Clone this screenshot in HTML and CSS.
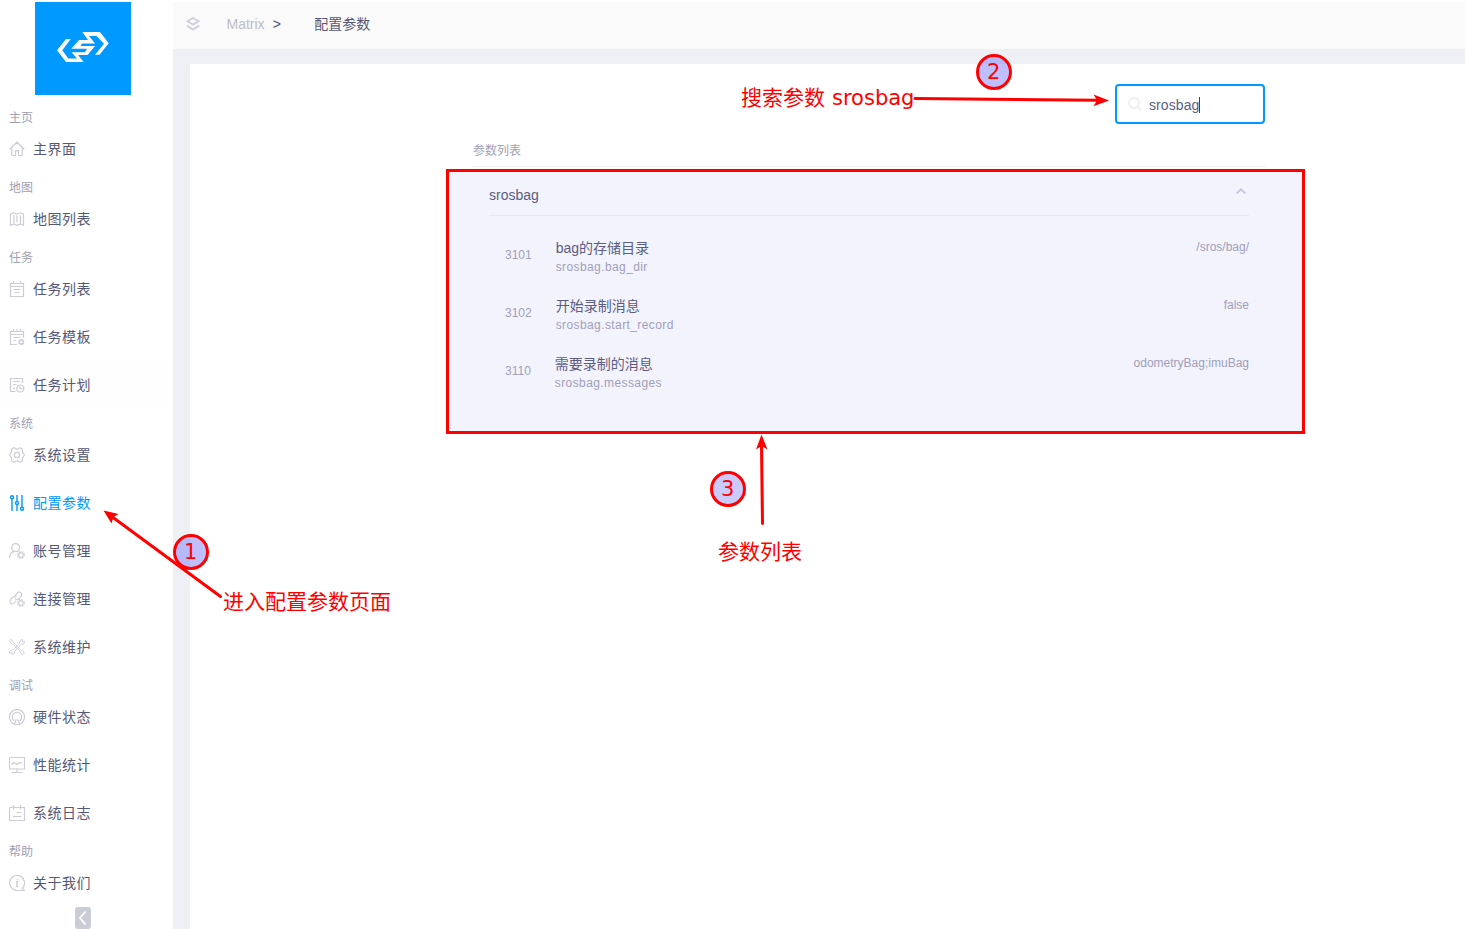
FILE: index.html
```html
<!DOCTYPE html>
<html lang="zh-CN">
<head>
<meta charset="utf-8">
<title>Matrix</title>
<link rel="stylesheet" href="styles.css">
</head>
<body>
<div class="app">
  <aside class="sidebar">
    <div class="logo">
      <svg width="96" height="93" viewBox="0 0 96 93" fill="#fff">
        <path d="M35.700 37H31L22 48.300 31 60H48.700L43 53H52.500L60 44H45.500L47 41.500H60L54 34H61.500L69 41.700 60 52.700H64.500L73.700 41.300 65 30H47.300L53 38H44L36.300 46.700H52L50 50.300H36.500L42 56.500H33.300L27.300 48.300Z"/>
      </svg>
    </div>
    <nav class="nav">
      <h2 class="group">主页</h2>
      <a class="item"><svg class="icon" viewBox="0 0 16 16"><path d="M.7 8.200 8 1.200l7.300 7M2.800 7v7.500h3.700V9.700h3v4.800h3.700V7"/></svg>主界面</a>
      <h2 class="group">地图</h2>
      <a class="item"><svg class="icon" viewBox="0 0 16 16"><path d="M1.500 3.200 5 1.800l3 1.400 3.500-1.400 3 1.400v11L11.500 13 8 14.300 5 13l-3.500 1.300zM5 4.500V13M8 4.500v6.500M11.500 4.500V13"/></svg>地图列表</a>
      <h2 class="group">任务</h2>
      <a class="item"><svg class="icon" viewBox="0 0 16 16"><path d="M1.500 2.500h13v13h-13zM1.500 5.500h13M4.500 0v3M11.500 0v3M4.500 8.500h7M5.500 11.500h5"/></svg>任务列表</a>
      <a class="item"><svg class="icon" viewBox="0 0 16 16"><path d="M14.500 9V2.500h-13v13H8M1.500 5.500h13M4.500 0v3M8 0v3M11.500 0v3M4.500 8.500h7M4.500 11.500h3"/><circle cx="12.300" cy="13" r="2.100" stroke-width="1.600"/></svg>任务模板</a>
      <a class="item hovered"><svg class="icon" viewBox="0 0 16 16"><path d="M13.500 6V1.500h-12v13h5M4 4.500h7M4 7.500h3.500M4 11.500h2M11 9.500v2.200h2.500"/><circle cx="11.300" cy="11.500" r="3.500"/></svg>任务计划</a>
      <h2 class="group">系统</h2>
      <a class="item"><svg class="icon" viewBox="0 0 16 16"><path d="M5 .7 8 2.200 11 .7l2.300 1.400.2 3.100L15.500 8l-2 2.800-.2 3.100L11 15.300l-3-1.500-3 1.500-2.300-1.400-.2-3.100L.5 8l2-2.800.2-3.100z" stroke-linejoin="round"/><circle cx="8" cy="8" r="2.700"/></svg>系统设置</a>
      <a class="item active"><svg class="icon" viewBox="0 0 16 16"><path d="M3 4v12M8 0v6.500M8 9.800V16M13 0v12"/><circle cx="3" cy="2.300" r="1.500"/><circle cx="8" cy="8" r="1.500"/><circle cx="13" cy="13.800" r="1.500"/></svg>配置参数</a>
      <a class="item"><svg class="icon" viewBox="0 0 16 16"><circle cx="6.700" cy="4.600" r="4"/><path d="M.5 15c0-3.500 2-6 4.800-6.700M8.300 8.200l1 .5"/><circle cx="12" cy="12" r="2.400" stroke-width="1.100"/><circle cx="12" cy="12" r="3.400" stroke-width="1.200" stroke-dasharray="1.400 1.270"/></svg>账号管理</a>
      <a class="item"><svg class="icon" viewBox="0 0 16 16"><path d="M5.200 6.500 8 2.500C10-.8 14 2 12.300 5L9.500 8C8 9.200 6.300 8.300 6.300 7M7.500 5 3.500 6.300 1.200 9c-1.500 3 2 5.500 4 3l1.600-2"/><circle cx="12" cy="12" r="2.400" stroke-width="1.100"/><circle cx="12" cy="12" r="3.400" stroke-width="1.200" stroke-dasharray="1.400 1.270"/></svg>连接管理</a>
      <a class="item"><svg class="icon thin" viewBox="0 0 16 16"><path d="M1.300.5.5 1.300 1.700 4l1.500.5 8 8 .3 1.500 2.300 1.500 1.500-1.500-1.500-2.300-1.500-.3-8-8-.5-1.500zM13.500.5 11 1.500l-.6 3-6.500 6.500-2.700.5L.5 14l2-.3.7 1.800 2.200-1 .5-2.600L12.300 5.500l2.500-.7.9-2.600-2 .7z"/></svg>系统维护</a>
      <h2 class="group">调试</h2>
      <a class="item"><svg class="icon" viewBox="0 0 16 16"><path d="M5.300 15a7.500 7.500 0 1 1 5.400 0M5 11.700a4.700 4.700 0 1 1 6 0M6.800 11h2.400l1.500 4.500H5.300z"/></svg>硬件状态</a>
      <a class="item"><svg class="icon" viewBox="0 0 16 16"><path d="M.5.500h15v11.500H.5zM8 12v3.500M2.500 15.500h11M2.500 7.500l2.500-2 3 2 2.500-2 3 .5"/></svg>性能统计</a>
      <a class="item"><svg class="icon" viewBox="0 0 16 16"><path d="M.5 2.500h15v13H.5zM4.500 0v4.500M11.500 0v4.500M7.500 7.500h5M4 11.500h8.500"/></svg>系统日志</a>
      <h2 class="group">帮助</h2>
      <a class="item"><svg class="icon" viewBox="0 0 16 16"><path d="M13.200 13.500a7.500 7.500 0 1 0-5.200 2h7.500z"/><path d="M7 6.700h1.500L7.700 11.500H9M8.500 4v1.300" stroke-width="1.400"/></svg>关于我们</a>
    </nav>
    <button class="collapse" aria-label="collapse"><svg width="16" height="22" viewBox="0 0 16 22"><path d="M10.500 4.500 5 11l5.500 6.500" fill="none" stroke="#fff" stroke-width="1.800"/></svg></button>
  </aside>
  <div class="body">
    <header class="topbar">
      <svg class="layers" width="14" height="14" viewBox="0 0 14 14"><path d="M7 1 12.500 4.300 7 7.600 1.500 4.300zM.8 8.500 7 12.500l6.200-4" fill="none" stroke="#cfd0dc" stroke-width="1.900"/></svg>
      <span class="crumb-root">Matrix</span><span class="crumb-sep">&gt;</span><span class="crumb">配置参数</span>
    </header>
    <main class="page">
      <div class="content">
        <label class="search">
          <svg width="14" height="14" viewBox="0 0 14 14"><path d="M9.500 9.500 13 13" stroke="#eeeef4" stroke-width="2"/><circle cx="6" cy="6" r="5" fill="none" stroke="#eeeef4" stroke-width="1.800"/></svg>
          <span class="query">srosbag</span><span class="caret"></span>
        </label>
        <h1 class="list-title">参数列表</h1>
        <section class="panel">
          <div class="panel-head"><span>srosbag</span>
            <svg width="10" height="6" viewBox="0 0 10 6"><path d="M.700 5.400 5 1.200l4.300 4.200" fill="none" stroke="#c8c8dc" stroke-width="1.900"/></svg>
          </div>
          <div class="param"><span class="id">3101</span><div class="names"><div class="name">bag的存储目录</div><div class="key">srosbag.bag_dir</div></div><span class="value">/sros/bag/</span></div>
          <div class="param"><span class="id">3102</span><div class="names"><div class="name">开始录制消息</div><div class="key">srosbag.start_record</div></div><span class="value">false</span></div>
          <div class="param"><span class="id">3110</span><div class="names"><div class="name">需要录制的消息</div><div class="key">srosbag.messages</div></div><span class="value">odometryBag;imuBag</span></div>
        </section>
      </div>
    </main>
  </div>
</div>
<svg class="notes" width="1467" height="929" viewBox="0 0 1467 929">
  <g class="badge"><circle cx="191" cy="552" r="16.500"/><circle cx="994" cy="72" r="16.500"/><circle class="pale" cx="728" cy="489" r="16.500"/></g>
  <g class="line"><path d="M220.500 596.500 111 516"/><path d="M915 98.500 1098 100.300"/><path d="M762.500 523.500 761.500 446"/></g>
  <g class="head"><path d="M103.500 510.500 118.500 514 113.300 517.300 111.500 523.500Z"/><path d="M1109 100.500 1093.500 106.300 1097 100.300 1093.500 94.500Z"/><path d="M761.500 434.500 767.500 449.500 761.500 446 756 449.500Z"/></g>
  <g class="label">
    <text x="184" y="559">1</text><text x="987" y="79">2</text><text x="721" y="496">3</text>
    <text x="741" y="105">搜索参数 <tspan x="832">srosbag</tspan></text>
    <text x="223" y="609">进入配置参数页面</text>
    <text x="718" y="559">参数列表</text>
  </g>
</svg>
</body>
</html>
```
FILE: styles.css
```css
* { box-sizing: border-box; }
body {
  margin: 0;
  background: #fff;
  color: #515a6e;
  font: 14px/20px "Liberation Sans", "Noto Sans CJK SC", sans-serif;
}
h1, h2 { margin: 0; font-weight: 400; }
.app { display: flex; height: 929px; padding: 2px 2px 0 0; overflow: hidden; }

.sidebar { width: 173px; flex: none; display: flex; flex-direction: column; }
.logo { width: 96px; height: 93px; margin-left: 35px; background: #09f; flex: none; }
.logo svg { display: block; }
.nav { padding-top: 8px; }
.group { height: 22px; padding: 5px 9px 0; font-size: 12px; line-height: 20px; color: #a0a1b3; }
.item {
  display: flex; align-items: center; gap: 8px;
  height: 48px; padding-left: 9px;
  color: #555875; letter-spacing: .5px;
}
.item.hovered { background: #fefefe; }
.item.active { color: #09f; }
.icon { width: 16px; height: 16px; flex: none; fill: none; stroke: #cccdd8; stroke-width: 1.2; }
.icon.thin { stroke-width: .9; }
.active .icon { stroke: #09f; stroke-width: 1.4; }
.collapse {
  width: 16px; height: 22px; margin-left: 75px; padding: 0;
  border: 0; border-radius: 3px; background: #cbcdd6; flex: none;
}
.collapse svg { display: block; }

.body { flex: 1; display: flex; flex-direction: column; background: #eff0f5; }
.topbar { display: flex; align-items: center; height: 47px; padding: 0 0 3px 13px; background: #fafafa; flex: none; }
.crumb-root { margin-left: 26.500px; color: #bbbdc6; }
.crumb-sep { margin-left: 8px; color: #50536f; }
.crumb { margin-left: 33.500px; color: #555875; }
.page { flex: 1; margin: 15px 0 0 17px; background: #fff; }

.content { width: 792px; margin: 0 0 0 283px; display: flex; flex-direction: column; }
.search {
  display: flex; align-items: center; align-self: flex-end;
  width: 150px; height: 40px; margin-top: 20px; padding-left: 11px;
  border: 2px solid #09f; border-radius: 4px; color: #5b5e7c;
}
.query { margin-left: 7px; padding-top: 2px; letter-spacing: .1px; }
.caret { width: 1px; height: 16px; background: #3c3f5c; margin: 2px 0 0 -.5px; }
.list-title {
  height: 43px; padding-top: 17px; border-bottom: 1px solid #ededf3;
  font-size: 12px; line-height: 20px; color: #a0a1b3;
}
.panel {
  width: 859px; height: 265px; margin: 2px 0 0 -27px; padding: 0 53px 0 40px;
  border: 3px solid #f00; background: #f3f3fd;
}
.panel-head {
  display: flex; justify-content: space-between;
  height: 44px; padding: 13px 3px 0 0; margin-bottom: 18px;
  border-bottom: 1px solid #e5e5f1; color: #5b5c7e;
}
.panel-head svg { margin-top: 3px; }
.param { display: flex; align-items: flex-start; height: 58px; padding-left: 16px; font-size: 12px; color: #a09fb9; }
.id { padding-top: 11px; }
.names { margin-left: 24px; }
.name { padding-top: 4px; font-size: 14px; line-height: 20px; color: #5b5c7e; }
.key { line-height: 18px; letter-spacing: .4px; }
.value { margin-left: auto; padding-top: 3px; }

.notes { position: absolute; left: 0; top: 0; }
.badge { fill: rgba(128, 128, 255, .5); stroke: #f00; stroke-width: 3; }
.badge .pale { fill: #cbcbfb; }
.line { fill: none; stroke: #f00; stroke-width: 3; stroke-linecap: round; }
.head { fill: #f00; }
.label { fill: #f00; font: 21px "DejaVu Sans", "Noto Sans CJK SC", sans-serif; }
```
